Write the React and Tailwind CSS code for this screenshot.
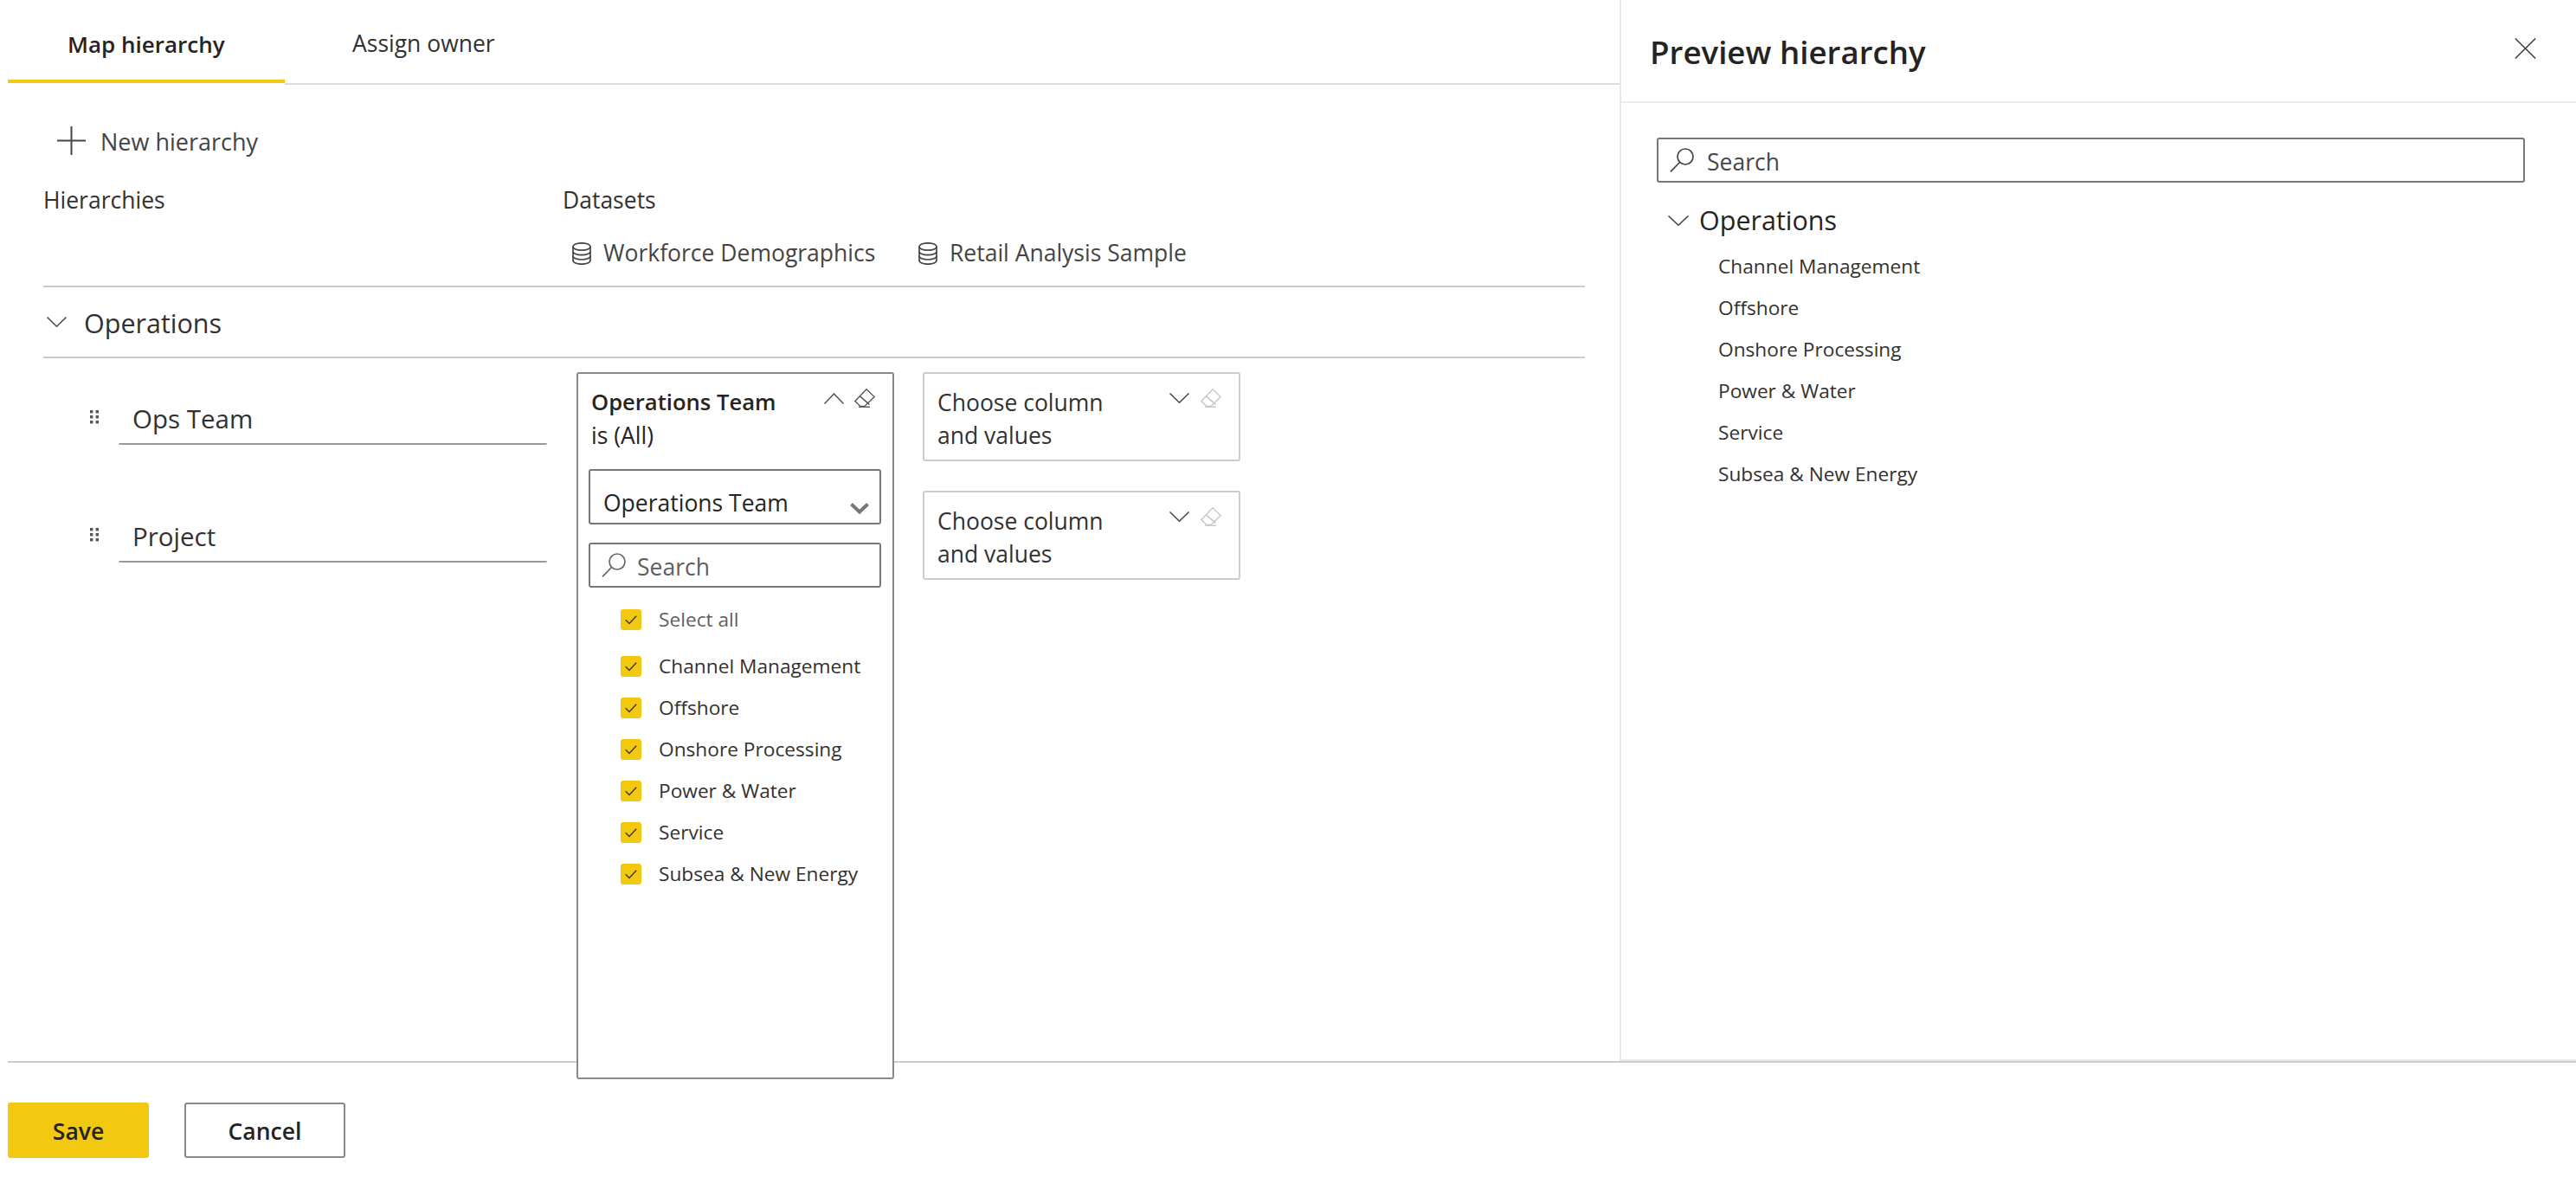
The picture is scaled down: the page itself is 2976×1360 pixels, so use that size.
import React from "react";

const values = ["Channel Management", "Offshore", "Onshore Processing", "Power & Water", "Service", "Subsea & New Energy"];

function Plus() {
  return (
    <svg width="33" height="33" viewBox="0 0 33 33" fill="none" stroke="#444" strokeWidth="2">
      <path d="M0 16.5H33M16.5 0V33" />
    </svg>
  );
}

function ChevronDown({ w = 23, h = 12, color = "#444" }) {
  return (
    <svg width={w} height={h} viewBox="0 0 23 12" fill="none" stroke={color} strokeWidth="1.5" preserveAspectRatio="none">
      <path d="M0.5 0.5L11.5 11.2L22.5 0.5" />
    </svg>
  );
}

function ChevronUp() {
  return (
    <svg width="23" height="13" viewBox="0 0 23 13" fill="none" stroke="#555" strokeWidth="1.5">
      <path d="M0.5 12.5L11.5 1L22.5 12.5" />
    </svg>
  );
}

function BoldChevron() {
  return (
    <svg width="22" height="13" viewBox="0 0 22 13" fill="none" stroke="#777" strokeWidth="4">
      <path d="M1.5 1.5L11 10.5L20.5 1.5" />
    </svg>
  );
}

function Eraser({ color = "#555" }) {
  return (
    <svg width="24" height="22" viewBox="0 0 24 22" fill="none" stroke={color} strokeWidth="1.4">
      <path d="M0.8 14.6L14 0.8L23.2 9.6L11.8 20.4H7Z" />
      <path d="M6.2 8.6L17.4 18.4" />
      <path d="M5 21.2H18" />
    </svg>
  );
}

function Database() {
  return (
    <svg width="22" height="26" viewBox="0 0 22 26" fill="none" stroke="#444" strokeWidth="1.7">
      <ellipse cx="11" cy="5" rx="10" ry="4.2" />
      <path d="M1 5V21C1 23.4 5.5 25.2 11 25.2S21 23.4 21 21V5" />
      <path d="M1 10.5C1 12.9 5.5 14.7 11 14.7S21 12.9 21 10.5" />
      <path d="M1 15.8C1 18.2 5.5 20 11 20S21 18.2 21 15.8" />
    </svg>
  );
}

function SearchIcon({ color = "#666" }) {
  return (
    <svg width="28" height="28" viewBox="0 0 28 28" fill="none" stroke={color} strokeWidth="1.7">
      <circle cx="18" cy="10" r="9" />
      <path d="M11.5 16.5L1 27.3" />
    </svg>
  );
}

function Check() {
  return (
    <svg width="14" height="11" viewBox="0 0 14 11" fill="none" stroke="#3b3a2f" strokeWidth="1.4">
      <path d="M0.8 5.2L5 9.6L13.2 0.8" />
    </svg>
  );
}

function Close() {
  return (
    <svg width="25" height="24" viewBox="0 0 25 24" fill="none" stroke="#444" strokeWidth="1.6">
      <path d="M0.8 0.5L24.2 23.5M24.2 0.5L0.8 23.5" />
    </svg>
  );
}

function Dots() {
  return (
    <svg width="10" height="16" viewBox="0 0 10 16" fill="#555" className="shrink-0 -translate-y-[3px]">
      {[0, 6, 12].map((y) => (
        <g key={y}>
          <rect x="0" y={y} width="3.4" height="3.4" />
          <rect x="6.6" y={y} width="3.4" height="3.4" />
        </g>
      ))}
    </svg>
  );
}

function HierarchyRow({ name }) {
  return (
    <div className="flex items-center gap-[23px] pl-[54px]">
      <Dots />
      <div className="flex h-[58px] w-[495px] items-center rounded-b-[2px] border-b-2 border-[#999] pl-[16px] text-[29.5px] leading-[40px] text-[#323130]">
        {name}
      </div>
    </div>
  );
}

function ValueRow({ label, muted }) {
  return (
    <div className="flex h-[48px] items-center gap-[20px] pl-[49px]">
      <div className="flex h-[24px] w-[24px] items-center justify-center rounded-[3px] bg-[#F2C811]">
        <Check />
      </div>
      <span className={muted ? "text-[22.7px] leading-[30px] text-[#605e5c]" : "text-[22.7px] leading-[30px] text-[#323130]"}>{label}</span>
    </div>
  );
}

function ChooseCard() {
  return (
    <div className="flex h-[103px] w-[367px] justify-between rounded-[3px] border-2 border-[#ccc] bg-white">
      <div className="pl-[15px] pt-[14px] text-[26.5px] leading-[38px] text-[#323130]">
        <div>Choose column</div>
        <div>and values</div>
      </div>
      <div className="flex items-center gap-[13px] self-start pr-[20px] pt-[17px]">
        <ChevronDown />
        <Eraser color="#c8c6c4" />
      </div>
    </div>
  );
}

function FilterCard() {
  return (
    <div className="relative z-10 h-[817px] w-[367px] shrink-0 rounded-[3px] border-2 border-[#888] bg-white">
      <div className="flex h-[90px] justify-between">
        <div className="pl-[15px] pt-[14px] text-[26.5px] leading-[38px] text-[#252423]">
          <div className="text-[25.6px] font-[550]">Operations Team</div>
          <div>is (All)</div>
        </div>
        <div className="flex items-center gap-[12px] self-start pr-[20px] pt-[17px]">
          <ChevronUp />
          <Eraser />
        </div>
      </div>
      <div className="ml-[12px] mt-[20px] flex h-[64px] w-[338px] items-start justify-between rounded-[3px] border-2 border-[#777] pl-[15px] pr-[12px] pt-[18px] text-[26.5px] leading-[38px] text-[#252423]">
        <span>Operations Team</span>
        <span className="mt-[19px] flex">
          <BoldChevron />
        </span>
      </div>
      <div className="ml-[12px] mt-[21px] flex h-[52px] w-[338px] items-center gap-[13px] rounded-[3px] border-2 border-[#777] pl-[13px] text-[26.5px] leading-[38px] text-[#605e5c]">
        <SearchIcon />
        <span className="translate-y-[2px]">Search</span>
      </div>
      <div className="mt-[13px]">
        <ValueRow label="Select all" muted />
      </div>
      <div className="mt-[6px] flex flex-col">
        {values.map((v) => (
          <ValueRow key={v} label={v} />
        ))}
      </div>
    </div>
  );
}

function MainPane() {
  return (
    <div className="flex h-full w-[1871px] shrink-0 flex-col pl-[9px]">
      <div className="flex h-[98px] items-start">
        <div className="flex h-[96px] w-[320px] items-center border-b-4 border-[#F2C811] pl-[69px] pt-[10px] text-[26px] font-[550] text-[#252423]">
          Map hierarchy
        </div>
        <div className="flex h-[98px] flex-1 items-center border-b-2 border-[#ddd] pl-[78px] pt-[6px] text-[26.5px] text-[#323130]">
          Assign owner
        </div>
      </div>

      <div className="mt-[48px] flex h-[33px] items-center gap-[17px] pl-[57px] text-[27px] font-medium text-[#444]">
        <Plus />
        <span className="translate-y-[2px]">New hierarchy</span>
      </div>

      <div className="pl-[41px] pr-[40px]">
        <div className="mt-[33px] grid h-[30px] grid-cols-[600px_1fr] items-center text-[26.5px] font-medium text-[#323130]">
          <span>Hierarchies</span>
          <span>Datasets</span>
        </div>

        <div className="mt-[36px] flex h-[30px] items-center pl-[611px] text-[26.5px] text-[#444]">
          <div className="flex w-[400px] items-center gap-[14px]">
            <Database />
            <span>Workforce Demographics</span>
          </div>
          <div className="flex items-center gap-[14px]">
            <Database />
            <span>Retail Analysis Sample</span>
          </div>
        </div>

        <div className="mt-[22px] flex h-[84px] items-center gap-[20px] border-y-2 border-[#ccc] pl-[4px]">
          <ChevronDown />
          <span className="translate-y-[2px] text-[30.5px] font-medium text-[#323130]">Operations</span>
        </div>

        <div className="flex pt-[16px]">
          <div className="flex w-[616px] shrink-0 flex-col gap-[78px] pt-[26px]">
            <HierarchyRow name="Ops Team" />
            <HierarchyRow name="Project" />
          </div>
          <FilterCard />
          <div className="ml-[33px] flex flex-col gap-[34px]">
            <ChooseCard />
            <ChooseCard />
          </div>
        </div>
      </div>
    </div>
  );
}

function PreviewPane() {
  return (
    <div className="flex h-full flex-1 flex-col border-b-2 border-l-2 border-[#e9e8e6]">
      <div className="flex h-[119px] shrink-0 items-start justify-between border-b-2 border-[#edebe9] pl-[33px] pr-[46px]">
        <span className="pt-[34px] text-[36.7px] font-[550] leading-[52px] text-[#252423]">Preview hierarchy</span>
        <span className="flex pt-[44px]">
          <Close />
        </span>
      </div>
      <div className="ml-[41px] mt-[40px] flex h-[52px] w-[1003px] items-center gap-[15px] rounded-[3px] border-2 border-[#777] pl-[13px] text-[26.5px] leading-[38px] text-[#484644]">
        <SearchIcon color="#444" />
        <span className="translate-y-[2px]">Search</span>
      </div>
      <div className="ml-[54px] mt-[20px] flex h-[48px] items-center gap-[12px]">
        <ChevronDown w={24} h={12} />
        <span className="text-[30.5px] font-medium text-[#252423]">Operations</span>
      </div>
      <div className="ml-[112px] mt-[5px] flex flex-col">
        {values.map((v) => (
          <div key={v} className="flex h-[48px] items-center text-[22.7px] text-[#323130]">
            {v}
          </div>
        ))}
      </div>
    </div>
  );
}

export default function App() {
  return (
    <div className="flex h-[1360px] w-[2976px] flex-col overflow-hidden bg-white font-['Open_Sans',sans-serif]">
      <div className="flex h-[1226px] shrink-0">
        <MainPane />
        <PreviewPane />
      </div>
      <div className="ml-[9px] flex-1 border-t-2 border-[#ccc] pt-[46px]">
        <div className="flex gap-[41px]">
          <button className="h-[64px] w-[163px] rounded-[3px] bg-[#F2C811] pt-[3px] text-[26.5px] font-[550] text-[#252423]">Save</button>
          <button className="h-[64px] w-[186px] rounded-[3px] border-2 border-[#888] bg-white pt-[3px] text-[26.5px] font-[550] text-[#252423]">Cancel</button>
        </div>
      </div>
    </div>
  );
}
